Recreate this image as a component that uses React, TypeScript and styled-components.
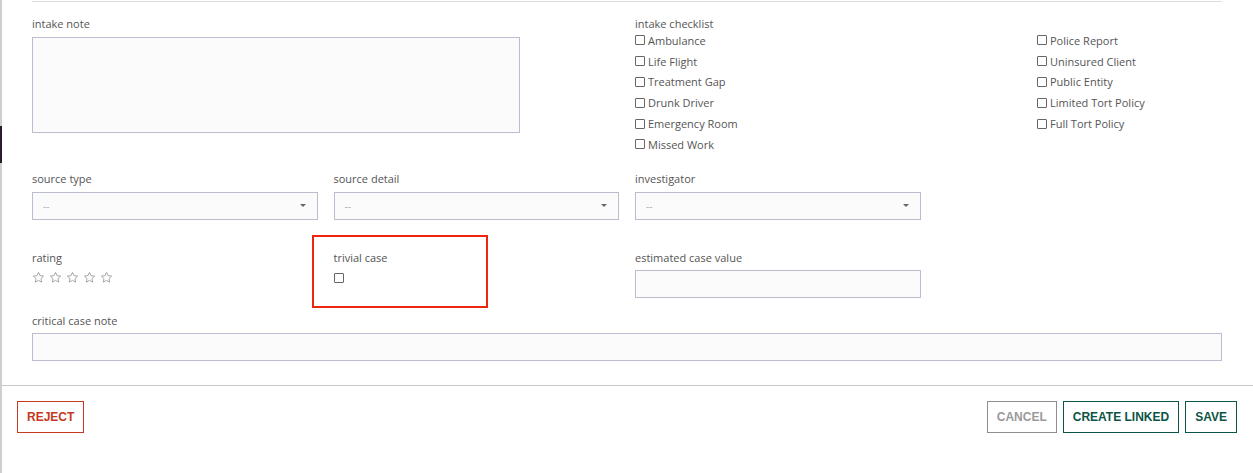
import React from "react";
import styled, { createGlobalStyle } from "styled-components";

const GlobalStyle = createGlobalStyle`
  html, body {
    margin: 0;
    padding: 0;
    background: #ffffff;
  }
  body {
    font-family: "Open Sans", "Liberation Sans", sans-serif;
  }
`;

const Page = styled.div`
  display: flex;
  width: 1253px;
  height: 473px;
  overflow: hidden;
`;

const Backdrop = styled.div`
  width: 2px;
  flex: none;
  background: linear-gradient(
    to bottom,
    #cfcfcf 0px,
    #cfcfcf 126px,
    #2b1b2c 126px,
    #2b1b2c 163px,
    #cfcfcf 163px
  );
`;

const Modal = styled.div`
  flex: 1;
  display: flex;
  flex-direction: column;
  background: #fff;
`;

const Form = styled.div`
  padding: 0 15px 0 30px;
`;

const TopRule = styled.div`
  margin: 1px 16px 0 0;
  height: 1px;
  background: #dcdcdc;
`;

const Row = styled.div<{ $top: number }>`
  display: grid;
  grid-template-columns: repeat(4, 1fr);
  margin-top: ${(p) => p.$top}px;
`;

const Field = styled.div<{ $span?: number }>`
  grid-column: span ${(p) => p.$span || 1};
  padding-right: 16px;
  position: relative;
`;

const Label = styled.div`
  font-size: 11px;
  line-height: 14px;
  color: #555;
`;

const TextArea = styled.div`
  margin-top: 6px;
  width: 488px;
  height: 96px;
  box-sizing: border-box;
  border: 1px solid #b9bdcf;
  background: #fbfbfc;
`;

const Checklist = styled.div`
  margin-top: -1px;
  display: grid;
  grid-template-columns: 402px 1fr;
  grid-auto-flow: column;
  grid-template-rows: repeat(6, 20.8px);
`;

const CheckItem = styled.div<{ $col: number }>`
  grid-column: ${(p) => p.$col};
  display: flex;
  align-items: center;
  gap: 3px;
  font-size: 11px;
  color: #555;
`;

const Box = styled.span`
  display: inline-block;
  width: 8px;
  height: 8px;
  border: 1px solid #666;
  border-radius: 1px;
  background: #fff;
  flex: none;
`;

const Select = styled.div`
  margin-top: 6px;
  height: 28px;
  box-sizing: border-box;
  border: 1px solid #b9bdcf;
  background: #fbfbfc;
  display: flex;
  align-items: center;
  justify-content: space-between;
  padding: 0 11px 0 10px;
  font-size: 10px;
  color: #a9adbd;
`;

const Caret = styled.span`
  width: 0;
  height: 0;
  border-left: 3px solid transparent;
  border-right: 3px solid transparent;
  border-top: 3px solid #666;
`;

const Input = styled.div`
  margin-top: 5px;
  height: 28px;
  box-sizing: border-box;
  border: 1px solid #b9bdcf;
  background: #fbfbfc;
`;

const Stars = styled.div`
  margin-top: 6px;
  display: flex;
  gap: 4px;
`;

const TrivialBox = styled(Box)`
  margin-top: 8px;
  display: block;
`;

const Highlight = styled.div`
  position: absolute;
  left: -22px;
  top: -16px;
  width: 176px;
  height: 73px;
  box-sizing: border-box;
  border: 2px solid #f0250b;
  pointer-events: none;
`;

const BottomRule = styled.div`
  margin-top: 24px;
  height: 1px;
  background: #c8c8c8;
`;

const Footer = styled.div`
  display: flex;
  justify-content: space-between;
  padding: 15px 16px 0 15px;
`;

const Actions = styled.div`
  display: flex;
  gap: 6px;
`;

const Button = styled.button<{ $tone: "red" | "gray" | "green" }>`
  height: 32px;
  padding: 0 9px;
  background: #fff;
  font-family: "Liberation Sans", Arial, sans-serif;
  font-weight: bold;
  font-size: 12px;
  letter-spacing: 0;
  text-transform: uppercase;
  border: 1px solid
    ${(p) => (p.$tone === "red" ? "#c4391f" : p.$tone === "gray" ? "#8e8e8e" : "#0c5446")};
  color: ${(p) => (p.$tone === "red" ? "#c4391f" : p.$tone === "gray" ? "#9a9a9a" : "#0c5446")};
  cursor: pointer;
`;

const Star = () => (
  <svg width="13" height="13" viewBox="0 0 24 24" fill="none" stroke="#9a9a9a" strokeWidth="1.6" strokeLinejoin="round">
    <path d="M12 2.5l2.9 6.1 6.6.8-4.9 4.6 1.3 6.6L12 17.3l-5.9 3.3 1.3-6.6-4.9-4.6 6.6-.8z" />
  </svg>
);

const leftChecks = ["Ambulance", "Life Flight", "Treatment Gap", "Drunk Driver", "Emergency Room", "Missed Work"];
const rightChecks = ["Police Report", "Uninsured Client", "Public Entity", "Limited Tort Policy", "Full Tort Policy"];

export default function App() {
  return (
    <Page>
      <GlobalStyle />
      <Backdrop />
      <Modal>
        <Form>
          <TopRule />
          <Row $top={15}>
            <Field $span={2}>
              <Label>intake note</Label>
              <TextArea />
            </Field>
            <Field $span={2}>
              <Label>intake checklist</Label>
              <Checklist>
                {leftChecks.map((c) => (
                  <CheckItem key={c} $col={1}>
                    <Box />
                    {c}
                  </CheckItem>
                ))}
                {rightChecks.map((c) => (
                  <CheckItem key={c} $col={2}>
                    <Box />
                    {c}
                  </CheckItem>
                ))}
              </Checklist>
            </Field>
          </Row>
          <Row $top={17}>
            <Field>
              <Label>source type</Label>
              <Select>
                --
                <Caret />
              </Select>
            </Field>
            <Field>
              <Label>source detail</Label>
              <Select>
                --
                <Caret />
              </Select>
            </Field>
            <Field>
              <Label>investigator</Label>
              <Select>
                --
                <Caret />
              </Select>
            </Field>
          </Row>
          <Row $top={31}>
            <Field>
              <Label>rating</Label>
              <Stars>
                <Star />
                <Star />
                <Star />
                <Star />
                <Star />
              </Stars>
            </Field>
            <Field>
              <Highlight />
              <Label>trivial case</Label>
              <TrivialBox />
            </Field>
            <Field>
              <Label>estimated case value</Label>
              <Input />
            </Field>
          </Row>
          <Row $top={16}>
            <Field $span={4}>
              <Label>critical case note</Label>
              <Input />
            </Field>
          </Row>
        </Form>
        <BottomRule />
        <Footer>
          <Button $tone="red">Reject</Button>
          <Actions>
            <Button $tone="gray">Cancel</Button>
            <Button $tone="green">Create Linked</Button>
            <Button $tone="green">Save</Button>
          </Actions>
        </Footer>
      </Modal>
    </Page>
  );
}
